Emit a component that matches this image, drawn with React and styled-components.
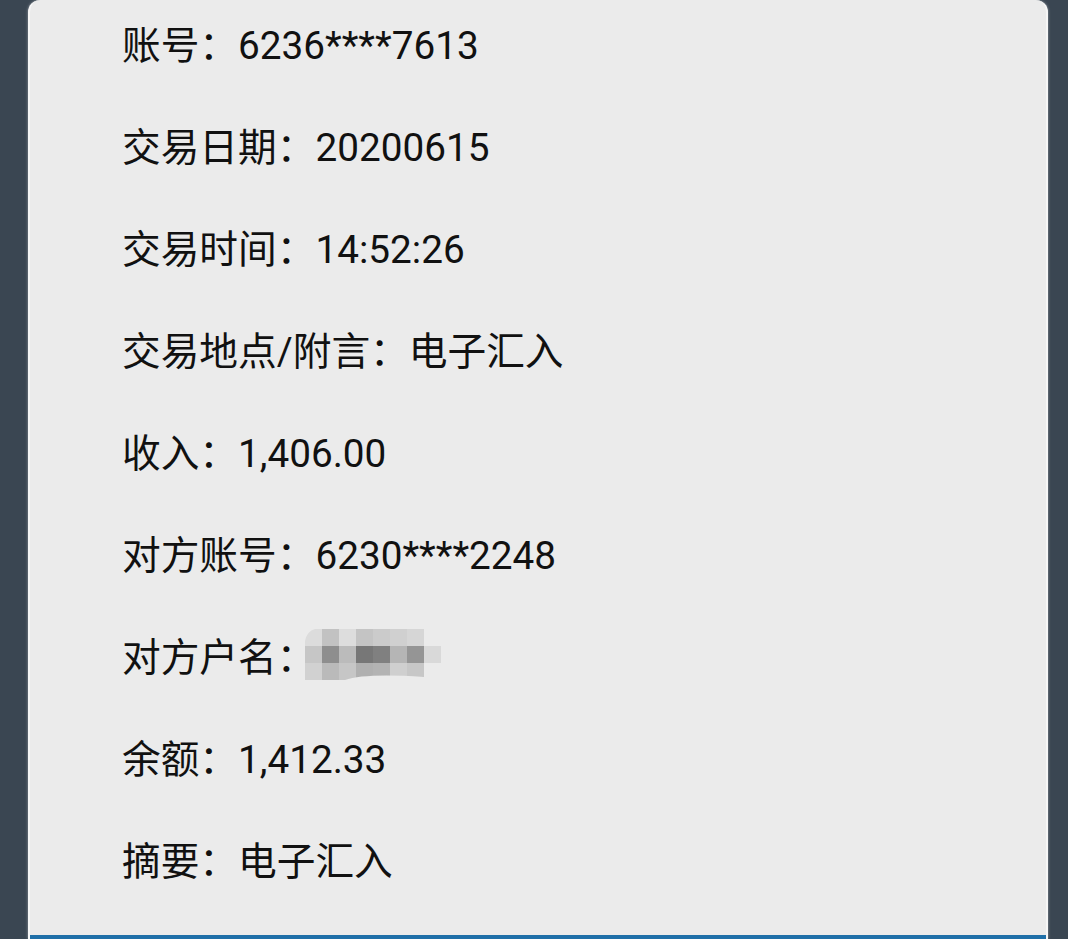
import styled, { createGlobalStyle } from 'styled-components';

const GlobalStyle = createGlobalStyle`
  html, body {
    margin: 0;
    padding: 0;
    background: #3a4652;
    overflow: hidden;
  }
`;

const Page = styled.div`
  height: 939px;
  padding-left: 28px;
  box-sizing: border-box;
`;

const Card = styled.div`
  width: 1020px;
  height: 939px;
  background: #ebebeb;
  border-left: 2px solid #f6f6f6;
  border-right: 2px solid #f6f6f6;
  border-radius: 12px 12px 0 0;
  box-shadow: 0 0 3px rgba(170, 175, 180, 0.8);
  display: flex;
  flex-direction: column;
  box-sizing: border-box;
`;

const List = styled.div`
  flex: 1;
  display: flex;
  flex-direction: column;
  gap: 56px;
  padding: 23px 0 0 92px;
`;

const Row = styled.div`
  font-family: Roboto, "Noto Sans CJK SC", sans-serif;
  font-size: 38.7px;
  line-height: 46px;
  color: #111;
  display: flex;
  align-items: center;
  white-space: nowrap;
`;

const Mosaic = styled.svg`
  display: block;
  margin-left: -10px;
  margin-top: -8px;
`;

const BottomBar = styled.div`
  height: 4px;
  background: #1f6fa8;
`;

const rows = [
  ['账号：', '6236****7613'],
  ['交易日期：', '20200615'],
  ['交易时间：', '14:52:26'],
  ['交易地点/附言：', '电子汇入'],
  ['收入：', '1,406.00'],
  ['对方账号：', '6230****2248'],
  ['对方户名：', null],
  ['余额：', '1,412.33'],
  ['摘要：', '电子汇入'],
];

const blocks = [
  ['#dcdcdc', '#c2c2c2', '#dddddd', '#c4c4c4', '#cbcbcb', '#d0d0d0', '#d6d6d6', null],
  ['#c6c6c6', '#8e8e8e', '#bbbbbb', '#777777', '#808080', '#b5b5b5', '#959595', '#d9d9d9'],
  ['#d1d1d1', '#bababa', '#c6c6c6', '#b0b0b0', '#b3b3b3', '#cfcfcf', '#c7c7c7', null],
];

const BlurredName = () => (
  <Mosaic width="136" height="51" viewBox="0 0 136 51">
    <defs>
      <clipPath id="mosaic-clip">
        <path d="M10 0 H119 V17 H136 V34 H119 V48 Q60 44 40 51 H0 V12 Q2 2 10 0 Z" />
      </clipPath>
    </defs>
    <g clipPath="url(#mosaic-clip)">
      {blocks.map((line, r) =>
        line.map((c, i) =>
          c ? <rect key={`${r}-${i}`} x={i * 17} y={r * 17} width="17" height="17" fill={c} /> : null
        )
      )}
    </g>
  </Mosaic>
);

export default function App() {
  return (
    <>
      <GlobalStyle />
      <Page>
        <Card>
          <List>
            {rows.map(([label, value]) => (
              <Row key={label}>
                {label}
                {value === null ? <BlurredName /> : value}
              </Row>
            ))}
          </List>
          <BottomBar />
        </Card>
      </Page>
    </>
  );
}
